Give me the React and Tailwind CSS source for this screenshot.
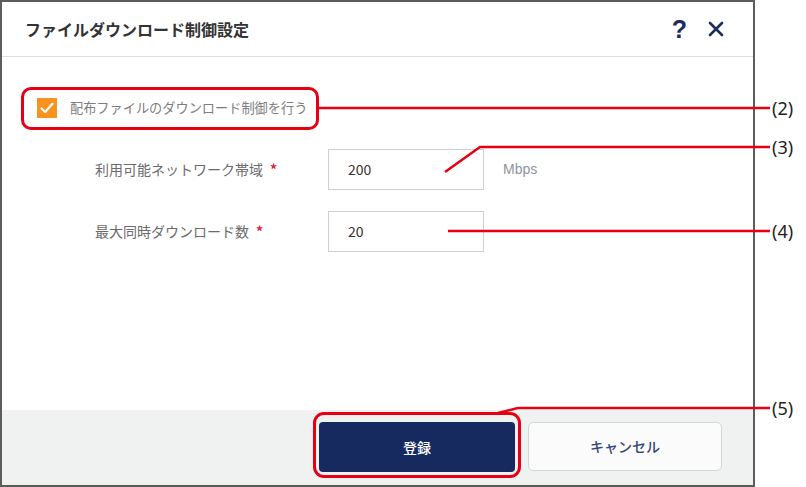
import React from "react";

const jp = { fontFamily: '"Noto Sans CJK JP", "Noto Sans", sans-serif' };

function Check() {
  return (
    <span className="flex h-[20px] w-[20px] items-center justify-center bg-[#f7931e]">
      <svg width="14" height="12" viewBox="0 0 14 12" fill="none">
        <path d="M1.5 6.5 L5.2 10 L12.5 1.8" stroke="white" strokeWidth="2.2" strokeLinecap="round" strokeLinejoin="round" />
      </svg>
    </span>
  );
}

function Row({ label, value, unit }) {
  return (
    <div className="flex items-center">
      <div className="w-[233px] text-[14px] text-[#6b6b6b]" style={jp}>
        {label}
        <span className="ml-[7px] text-[#d7263d] font-bold">*</span>
      </div>
      <div className="flex h-[41px] w-[156px] items-center border border-[#c9d1d5] pl-[19px] text-[14px] text-[#333]" style={jp}>
        {value}
      </div>
      {unit && (
        <span className="ml-[19px] text-[14px] font-medium text-[#8d949c]" style={{ fontFamily: '"Liberation Sans", Arial, sans-serif' }}>
          {unit}
        </span>
      )}
    </div>
  );
}

export default function App() {
  return (
    <div className="relative flex h-[487px] w-[806px] bg-white" style={jp}>
      <div className="flex h-[487px] w-[755px] flex-col border-2 border-[#5e5b5b] bg-white">
        <div className="flex h-[55px] shrink-0 items-center justify-between border-b border-[#dedede] pl-[23px] pr-[29px]">
          <span className="text-[16px] font-bold text-[#333]">ファイルダウンロード制御設定</span>
          <div className="flex items-center gap-[21px] text-[#1c2c5e]">
            <span className="text-[25px] font-black leading-none" style={{ fontFamily: '"Liberation Sans", Arial, sans-serif' }}>?</span>
            <svg width="16" height="16" viewBox="0 0 16 16">
              <path d="M2 2 L14 14 M14 2 L2 14" stroke="#1c2c5e" strokeWidth="2.6" strokeLinecap="round" />
            </svg>
          </div>
        </div>
        <div className="flex flex-1 flex-col pl-[35px] pt-[41px]">
          <div className="flex items-center gap-[13px]">
            <Check />
            <span className="text-[13.2px] text-[#7d7d7d]">配布ファイルのダウンロード制御を行う</span>
          </div>
          <div className="ml-[58px] mt-[31px] flex flex-col gap-[21px]">
            <Row label="利用可能ネットワーク帯域" value="200" unit="Mbps" />
            <Row label="最大同時ダウンロード数" value="20" />
          </div>
        </div>
        <div className="flex h-[75px] shrink-0 items-start justify-end gap-[13px] bg-[#f0f2f2] pr-[31px] pt-[12px]">
          <button className="flex h-[50px] w-[196px] items-center justify-center rounded-[4px] bg-[#172a60] text-[14px] font-medium text-white">
            登録
          </button>
          <button className="flex h-[49px] w-[194px] items-center justify-center rounded-[5px] border border-[#d2d6da] bg-[#fbfbfb] text-[14px] font-medium text-[#34457a]">
            キャンセル
          </button>
        </div>
      </div>

      {/* annotation overlays */}
      <div className="pointer-events-none absolute left-[21px] top-[87px] h-[43px] w-[298px] rounded-[10px] border-[3px] border-[#e60012]" />
      <div className="pointer-events-none absolute left-[313px] top-[412px] h-[66px] w-[208px] rounded-[11px] border-[3px] border-[#e60012]" />
      <svg className="pointer-events-none absolute left-0 top-0" width="806" height="487">
        <g stroke="#e60012" strokeWidth="2.5" fill="none">
          <path d="M318 108 H770" />
          <path d="M445 172 L480 147 H770" />
          <path d="M448 231 H770" />
          <path d="M498 413 L518 408 H770" />
        </g>
      </svg>
      {[
        ["(2)", 108],
        ["(3)", 147],
        ["(4)", 231],
        ["(5)", 408],
      ].map(([t, y]) => (
        <span
          key={t}
          className="absolute left-[772px] -translate-y-1/2 text-[18px] leading-none text-[#222]"
          style={{ top: y, fontFamily: '"Noto Sans", "Open Sans", sans-serif' }}
        >
          {t}
        </span>
      ))}
    </div>
  );
}
